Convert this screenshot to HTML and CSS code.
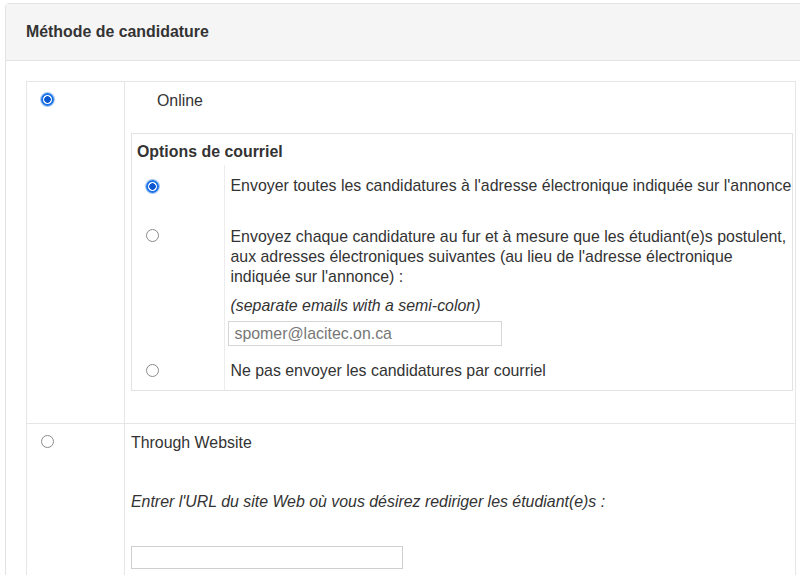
FILE: index.html
```html
<!DOCTYPE html>
<html lang="fr">
<head>
<meta charset="utf-8">
<title>Méthode de candidature</title>
<link rel="stylesheet" href="styles.css">
</head>
<body>
<div class="panel">
  <div class="panel-heading">Méthode de candidature</div>
  <div class="panel-body">
    <table class="methods">
      <tr class="row-online">
        <td class="col-radio"><span class="radio checked"></span></td>
        <td class="col-content">
          <div class="online-label">Online</div>
          <div class="options-box">
            <div class="options-title">Options de courriel</div>
            <table class="options">
              <tr class="opt-1">
                <td class="opt-radio"><span class="radio checked"></span></td>
                <td class="opt-text">Envoyer toutes les candidatures à l'adresse électronique indiquée sur l'annonce</td>
              </tr>
              <tr class="opt-2">
                <td class="opt-radio"><span class="radio"></span></td>
                <td class="opt-text">
                  <div>Envoyez chaque candidature au fur et à mesure que les étudiant(e)s postulent, aux adresses électroniques suivantes (au lieu de l'adresse électronique indiquée sur l'annonce) :</div>
                  <div class="hint">(separate emails with a semi-colon)</div>
                  <div class="email-input">spomer@lacitec.on.ca</div>
                </td>
              </tr>
              <tr class="opt-3">
                <td class="opt-radio"><span class="radio"></span></td>
                <td class="opt-text">Ne pas envoyer les candidatures par courriel</td>
              </tr>
            </table>
          </div>
        </td>
      </tr>
      <tr class="row-website">
        <td class="col-radio"><span class="radio"></span></td>
        <td class="col-content">
          <div class="website-label">Through Website</div>
          <div class="hint url-hint">Entrer l'URL du site Web où vous désirez rediriger les étudiant(e)s :</div>
          <div class="url-input"></div>
        </td>
      </tr>
    </table>
  </div>
</div>
</body>
</html>
```
FILE: styles.css
```css
html, body {
  margin: 0;
  padding: 0;
  background: #fff;
  overflow: hidden;
}
body {
  font-family: "Liberation Sans", Arial, sans-serif;
  font-size: 15.9px;
  line-height: 20px;
  color: #333;
}
.panel {
  margin: 3px 0 0 5px;
  width: 840px;
  border: 1px solid #e3e3e3;
  border-radius: 4px;
}
.panel-heading {
  background: #f5f5f5;
  border-bottom: 1px solid #e3e3e3;
  padding: 18px 20px 18px 20px;
  font-weight: bold;
  color: #333;
}
.panel-body {
  padding: 20px 20px;
}
table {
  border-collapse: collapse;
  border-spacing: 0;
}
.methods {
  width: 770px;
}
.methods > tbody > tr > td {
  border: 1px solid #e6e6e6;
  vertical-align: top;
  padding: 0;
}
.col-radio {
  width: 98px;
  padding: 11px 0 0 14px !important;
  box-sizing: border-box;
}
.col-content {
  padding: 0 0 0 6px !important;
}
.row-online .col-content {
  padding-bottom: 32px !important;
}
.radio {
  display: block;
  box-sizing: border-box;
  width: 13px;
  height: 13px;
  border-radius: 50%;
  border: 1px solid #8a8a8a;
  background: #fff;
}
.radio.checked {
  border: 2px solid #1a73e8;
  background: radial-gradient(circle, #0b57d0 0 3px, #fff 3.5px);
  box-shadow: 0 0 0 1px #a9c9f5;
}
.online-label {
  padding: 9px 0 0 26px;
  height: 51px;
  box-sizing: border-box;
}
.options-box {
  border: 1px solid #e3e3e3;
  margin-right: 2px;
}
.options-title {
  font-weight: bold;
  padding: 8px 0 3px 5px;
}
.options {
  width: 100%;
}
.options td {
  vertical-align: top;
  padding: 0;
}
.opt-radio {
  width: 92px;
  box-sizing: border-box;
  border-right: 1px solid #ececec;
  padding-left: 14px !important;
}
.opt-text {
  padding-left: 6px !important;
}
.opt-1 td { padding-top: 11px !important; padding-bottom: 31px !important; }
.opt-1 .opt-radio { padding-top: 15px !important; }
.opt-2 td { padding-bottom: 15px !important; }
.opt-2 .opt-radio { padding-top: 2px !important; }
.opt-3 td { padding-bottom: 9px !important; }
.opt-3 .opt-radio { padding-top: 3px !important; }
.hint {
  font-style: italic;
  margin-top: 9px;
}
.email-input {
  margin: 5px 0 0 -3px;
  width: 274px;
  height: 25px;
  box-sizing: border-box;
  border: 1px solid #d6d6d6;
  padding: 2px 6px;
  color: #777;
  line-height: 20px;
}
.website-label {
  padding-top: 9px;
}
.url-hint {
  margin-top: 39px;
}
.url-input {
  margin-top: 34px;
  width: 272px;
  height: 23px;
  box-sizing: border-box;
  border: 1px solid #cfcfcf;
  margin-bottom: 20px;
}
```
